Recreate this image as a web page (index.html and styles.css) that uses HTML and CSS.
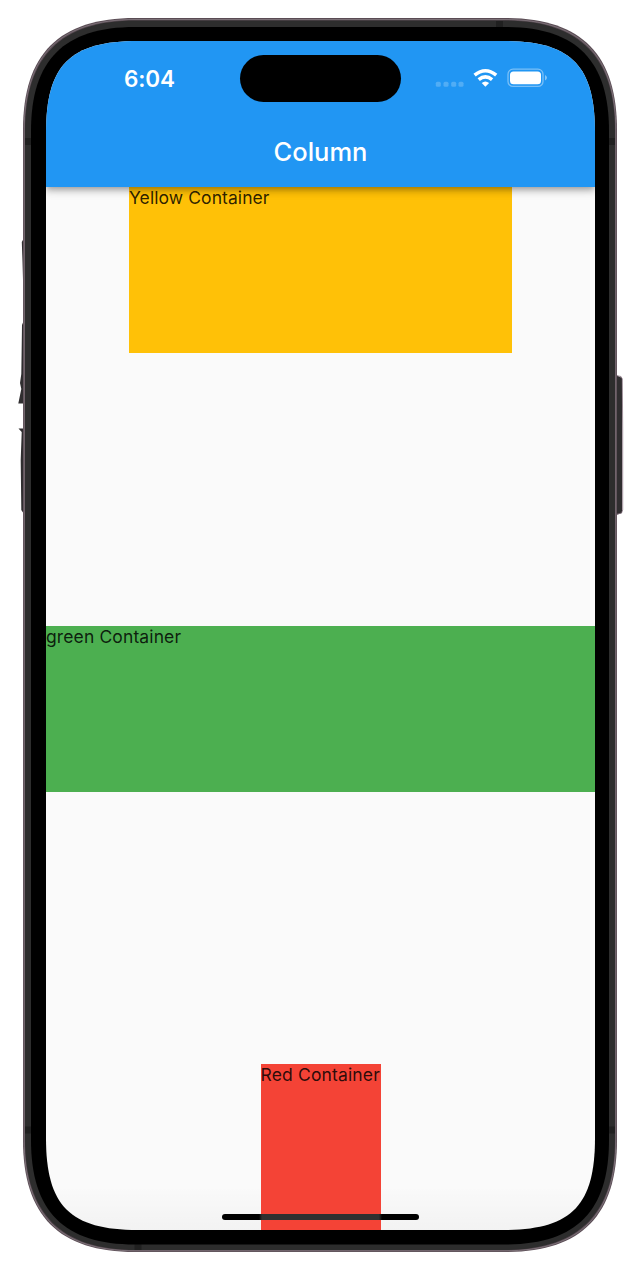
FILE: index.html
```html
<!DOCTYPE html>
<html lang="en">
<head>
<meta charset="utf-8">
<title>Column</title>
<link rel="stylesheet" href="styles.css">
</head>
<body>
<div class="device">
  <svg class="frame" viewBox="0 0 644 1276" aria-hidden="true">
    <g fill="#302e30">
      <path d="M24 238L21.8 242 22.5 262 23 280H24zM24 320L22 325 21.3 374 20 383 21.3 389 18.3 403.500H24zM18.500 428.500H24V514L21.300 510 20.700 460 21.700 432z"/>
      <path d="M616 375L622 378V513L616 515z"/>
    </g>
    <path d="M616 375.500L621 376.500 622.300 379 622.700 430V510L621.500 513 616 514.500" fill="none" stroke="#84707d" stroke-width=".8"/>
    <path fill="#5a4c54" d="M23 130C23 54 59 18 135 18H505C581 18 617 54 617 130V1140C617 1216 581 1252 505 1252H135C59 1252 23 1216 23 1140z"/>
    <path fill="none" stroke="#8a7f87" stroke-width=".7" d="M24.200 130C24.200 55 60 19.500 135 19.500H505C580 19.500 615.800 55 615.800 130V1140C615.800 1215 580 1250.800 505 1250.800H135C60 1250.800 24.200 1215 24.200 1140z"/>
    <path fill="#2d2d2d" d="M25 131C25 56 61 20.500 136 20.500H504C579 20.500 615 56 615 131V1139C615 1214 579 1250 504 1250H136C61 1250 25 1214 25 1139z"/>
    <path fill="#202020" d="M25 138h7v7h-7zM609 138h6v7h-6zM25 1126.500h7v7h-7zM609 1126.500h6v7h-6zM496 21h7v7h-7zM134.500 1244h7v6h-7z"/>
    <path fill="#000" d="M31 131C31 60 64 27 135 27H505C576 27 609 60 609 131V1140C609 1211.500 576 1244.500 505 1244.500H135C64 1244.500 31 1211.500 31 1140z"/>
  </svg>
  <main class="screen">
    <header class="app-bar">
      <div class="status">
        <span class="time">6:04</span>
        <span class="island"></span>
        <svg class="indicators" viewBox="0 0 114 24" aria-hidden="true">
          <g fill="#fff" fill-opacity=".22"><rect x="0.800" y="11.700" width="5" height="5" rx="1.500"/><rect x="8.500" y="11.700" width="5" height="5" rx="1.500"/><rect x="16.200" y="11.700" width="5" height="5" rx="1.500"/><rect x="23.500" y="11.700" width="5" height="5" rx="1.500"/></g>
          <g fill="none" stroke="#fff" stroke-width="3.500"><path d="M39.600 5.200Q50.400 -3.800 61.200 5.200"/><path d="M43.700 9.700Q50.400 4 57.100 9.700"/></g>
          <path fill="#fff" d="M46.700 12.900Q50.400 9.900 54.100 12.900L50.400 16.700z"/>
          <rect x="73" y="-.8" width="35" height="17.200" rx="5" fill="none" stroke="#fff" stroke-opacity=".4" stroke-width="1.300"/>
          <rect x="75" y="1.500" width="31" height="12.700" rx="3.500" fill="#fff"/>
          <path d="M110 5Q112 6 112 7.800T110 10.500z" fill="#fff" fill-opacity=".45"/>
        </svg>
      </div>
      <h1 class="title">Column</h1>
    </header>
    <section class="column">
      <div class="box yellow"><span class="label yellow-label">Yellow Container</span></div>
      <div class="box green"><span class="label green-label">green Container</span></div>
      <div class="box red"><span class="label red-label">Red Container</span></div>
    </section>
    <div class="home-indicator"></div>
  </main>
</div>
</body>
</html>
```

FILE: styles.css
```css
body {
  margin: 0;
  background: #fff;
  font-family: Inter, "Liberation Sans", sans-serif;
}

.device {
  position: relative;
  box-sizing: border-box;
  width: 644px;
  height: 1276px;
  padding: 41px 49px 46px 46px;
  overflow: hidden;
}

.frame {
  position: absolute;
  inset: 0;
  width: 644px;
  height: 1276px;
}

.screen {
  position: relative;
  display: flex;
  flex-direction: column;
  width: 549px;
  height: 1189px;
  background: #fafafa;
  clip-path: path("M0 92C0 24 24 0 92 0H457C525 0 549 24 549 92V1097C549 1165 525 1189 457 1189H92C24 1189 0 1165 0 1097Z");
}

.app-bar {
  position: relative;
  z-index: 1;
  flex: none;
  height: 146.4px;
  background: #2196f3;
  color: #fff;
  box-shadow: 0 2.5px 5px -1px rgba(0, 0, 0, .2), 0 5px 6px rgba(0, 0, 0, .14), 0 1px 13px rgba(0, 0, 0, .12);
}

.status {
  display: grid;
  grid-template-columns: 194px 161px 194px;
  align-items: center;
  height: 75px;
}

.time {
  justify-self: start;
  margin-left: 78px;
  font-size: 22.5px;
  font-weight: 600;
  line-height: 28px;
  letter-spacing: -.1px;
}

.island {
  height: 47px;
  border-radius: 24px;
  background: #000;
}

.indicators {
  width: 114px;
  height: 24px;
  margin: 6px 0 0 34px;
  overflow: visible;
}

.title {
  margin: 21px 0 0;
  font-size: 25.5px;
  font-weight: 450;
  line-height: 30px;
  text-align: center;
}

.column {
  display: flex;
  flex: 1;
  flex-direction: column;
  align-items: center;
  justify-content: space-between;
  background: linear-gradient(to bottom, transparent calc(100% - 44px), rgba(0, 0, 0, .03));
}

.box {
  height: 166px;
  white-space: nowrap;
}

.label {
  display: block;
  color: rgba(0, 0, 0, .84);
  font-size: 17.5px;
  line-height: 21px;
}

.yellow-label {
  letter-spacing: .08px;
}

.green-label {
  letter-spacing: .12px;
}

.red-label {
  letter-spacing: .15px;
}

.yellow {
  width: 383px;
  background: #ffc107;
}

.green {
  width: 549px;
  background: #4caf50;
}

.red {
  width: 120px;
  background: #f44336;
}

.home-indicator {
  position: absolute;
  bottom: 10px;
  left: 176px;
  width: 197px;
  height: 6.5px;
  border-radius: 4px;
  background: linear-gradient(to right, #000 37px, #303030 40px, #303030 157px, #000 160px);
}
```
